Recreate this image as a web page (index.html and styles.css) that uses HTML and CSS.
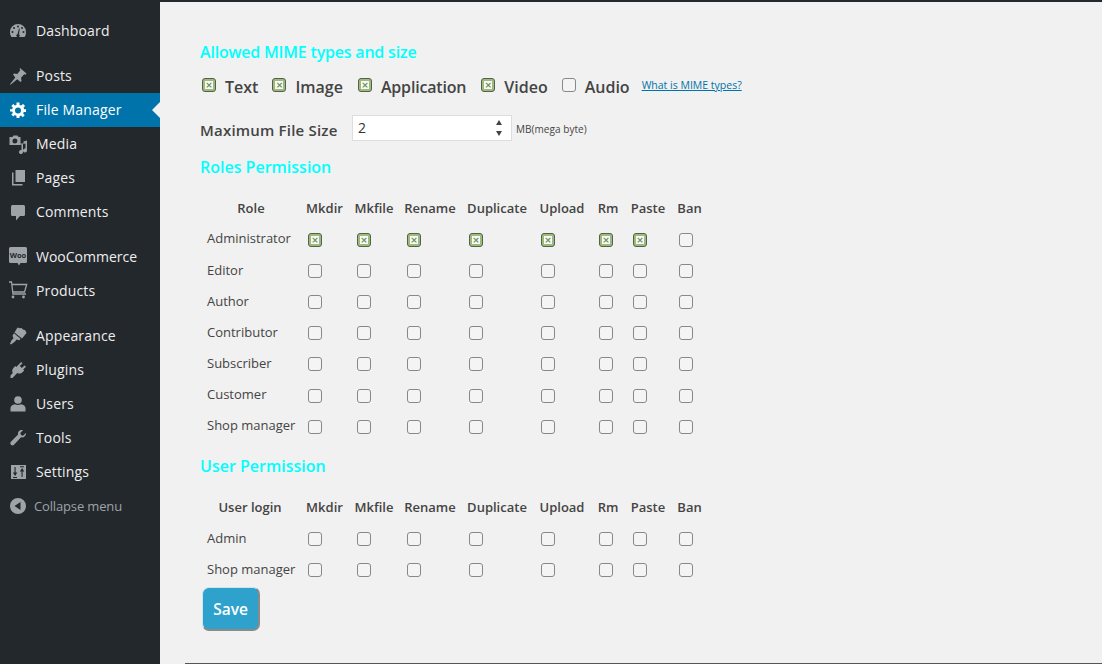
FILE: index.html
```html
<!DOCTYPE html>
<html lang="en">
<head>
<meta charset="utf-8">
<title>File Manager</title>
<link rel="stylesheet" href="styles.css">
</head>
<body>
<div class="app">
<nav class="menu">
  <ul class="group">
    <li class="item"><svg class="ic" viewBox="0 0 20 20"><path d="M10 3a8 8 0 0 0-8 8c0 1.900.5 3.500 1.400 5h13.200A8 8 0 0 0 18 11a8 8 0 0 0-8-8z"/><g class="cut"><circle cx="10" cy="5.500" r="1"/><circle cx="6" cy="7" r="1"/><circle cx="14" cy="7" r="1"/><circle cx="4.500" cy="11" r="1"/><circle cx="15.500" cy="11" r="1"/><path d="M11 7.500l.8.200-.8 5.500a1.700 1.700 0 1 1-1.500-.2z"/></g></svg><span>Dashboard</span></li>
  </ul>
  <ul class="group">
    <li class="item"><svg class="ic" viewBox="0 0 20 20"><path d="M12 2l6.500 5.500-1 1.200-1.300-.4-3.200 3.500.5 3.200-1 1-3.300-2.800-6.700 5.500-.5-.5 5.300-6.800L5 8.500l1-1 3.300.4 3-3.600-.6-1.300z"/></svg><span>Posts</span></li>
    <li class="item current"><svg class="ic" viewBox="0 0 20 20"><path fill-rule="evenodd" d="M18 12h-2.200c-.2.600-.4 1.100-.7 1.600l1.600 1.600-2 2-1.600-1.600c-.5.300-1 .5-1.600.7V18H8.500v-2.300c-.6-.2-1.100-.4-1.600-.7l-1.600 1.600-2-2 1.600-1.600c-.3-.5-.5-1-.7-1.600H2V9.200h2.200c.2-.6.4-1.100.7-1.600L3.300 6l2-2 1.600 1.600c.5-.3 1-.5 1.600-.7V2.500h3v2.400c.6.200 1.100.4 1.600.7L15.100 4l2 2-1.600 1.600c.3.500.5 1 .7 1.600H18zM10 7.500a3 3 0 1 0 0 6 3 3 0 0 0 0-6z"/></svg><span>File Manager</span></li>
    <li class="item"><svg class="ic" viewBox="0 0 20 20"><path fill-rule="evenodd" d="M1.500 3h3l1-1.500h4l1 1.500h2v8h-11zm5.500 1.500a2.500 2.500 0 1 0 0 5 2.500 2.500 0 0 0 0-5zM19 6.500V16.500a2 2 0 1 1-1.500-1.900V9.500l-2.500.5v8a2 2 0 1 1-1.500-1.900v-5.600h-1V9.500h3V7.500z"/></svg><span>Media</span></li>
    <li class="item"><svg class="ic" viewBox="0 0 20 20"><path d="M7.500 2h9.500v12H7.500zM5.500 4.500V16h9v1.500H4V4.500z"/></svg><span>Pages</span></li>
    <li class="item"><svg class="ic" viewBox="0 0 20 20"><path d="M4.500 3h11A1.500 1.500 0 0 1 17 4.500v8a1.500 1.500 0 0 1-1.500 1.500H12l-4 4.500V14H4.500A1.500 1.500 0 0 1 3 12.500v-8A1.500 1.500 0 0 1 4.500 3z"/></svg><span>Comments</span></li>
  </ul>
  <ul class="group">
    <li class="item plain"><svg class="ic" viewBox="0 0 20 20"><path d="M2.500 0h15A1.500 1.500 0 0 1 19 1.500v13a1.500 1.500 0 0 1-1.500 1.500H12.500l-1.500 2.500-1.500-2.500h-7A1.500 1.500 0 0 1 1 14.500v-13A1.500 1.500 0 0 1 2.500 0z"/><text class="woo" x="10" y="10.500" text-anchor="middle">Woo</text></svg><span>WooCommerce</span></li>
    <li class="item"><svg class="ic" viewBox="0 0 20 20"><path class="line" d="M1 1h2.500l1.500 12h13M3.700 3.500h15l-2.200 7.500H4.700"/><circle cx="5" cy="16" r="1.400"/><circle cx="15.500" cy="16" r="1.400"/></svg><span>Products</span></li>
  </ul>
  <ul class="group">
    <li class="item"><svg class="ic" viewBox="0 0 20 20"><path d="M9.500 1.500l2 .8 2-.3 1.500 1.500 2.200.7 1.300 2.800-4.500 5.500-7.500-6zM6 7.300l6.500 5.500-1.200 1.400-2.800-.6-1.500 2L3 18.500l-1-.8 1.700-3.700 1.800-1.600-1-2.700z"/></svg><span>Appearance</span></li>
    <li class="item"><svg class="ic" viewBox="0 0 20 20"><path d="M13.200 2l1.300 1.300-2.700 2.800 2 2 2.800-2.700 1.400 1.300-2.800 2.800 1 1-1.500 1.500c-1.800 1.800-4 2-5.500 1L4.500 18H2.500v-2.500l2.300-2.500c-1-1.500-.8-3.700 1-5.500L7.300 6l1 1z"/></svg><span>Plugins</span></li>
    <li class="item"><svg class="ic" viewBox="0 0 20 20"><circle cx="10" cy="6" r="3.800"/><path d="M2.500 17.500V14c0-2 2-3.500 4.500-3.800 1.800 1 4 1 6 0 2.500.3 4.500 1.800 4.500 3.800v3.500z"/></svg><span>Users</span></li>
    <li class="item"><svg class="ic" viewBox="0 0 20 20"><path d="M18 5.500c0 2.500-2.500 4.500-5 3.800L6 16.700a2.100 2.100 0 0 1-3.100-3l7.200-7.100C9.500 4 11.500 1.800 14 2c.4 0 .8.100 1 .2L12.300 5l.7 2 2 .7 2.800-2.700c.1.200.2.300.2.500z"/></svg><span>Tools</span></li>
    <li class="item"><svg class="ic" viewBox="0 0 20 20"><path d="M3 3h15v14H3z"/><path class="cut" d="M6.500 5h1.100v5.500h1.700l-2.200 3.500-2.200-3.500h1.600zM13.500 15h1.100V9.500h1.700l-2.200-3.500-2.200 3.500h1.600zM5 15h4v1H5zM12 4.200h4v1h-4z"/></svg><span>Settings</span></li>
    <li class="item collapse"><svg class="ic" viewBox="0 0 20 20"><path fill-rule="evenodd" d="M10 2a8 8 0 1 1 0 16 8 8 0 0 1 0-16zm2.500 4l-6 4 6 4z"/></svg><span>Collapse menu</span></li>
  </ul>
</nav>
<main class="content">
  <h2 class="heading first">Allowed MIME types and size</h2>
  <div class="mimes">
    <label class="mime snug"><span class="box on"></span>Text</label>
    <label class="mime"><span class="box on"></span>Image</label>
    <label class="mime tight"><span class="box on"></span>Application</label>
    <label class="mime snug"><span class="box on"></span>Video</label>
    <label class="mime"><span class="box"></span>Audio</label>
    <a class="help" href="#">What is MIME types?</a>
  </div>
  <div class="size">
    <span class="size-label">Maximum File Size</span>
    <span class="number">2<span class="spin"><i class="up"></i><i class="down"></i></span></span>
    <span class="unit">MB(mega byte)</span>
  </div>
  <h2 class="heading roles">Roles Permission</h2>
  <table class="perm role-table">
    <thead><tr><th>Role</th><th>Mkdir</th><th>Mkfile</th><th>Rename</th><th>Duplicate</th><th>Upload</th><th>Rm</th><th>Paste</th><th>Ban</th></tr></thead>
    <tbody>
      <tr><td class="name">Administrator</td><td><span class="box on"></span></td><td><span class="box on"></span></td><td><span class="box on"></span></td><td><span class="box on"></span></td><td><span class="box on"></span></td><td><span class="box on"></span></td><td><span class="box on"></span></td><td><span class="box"></span></td></tr>
      <tr><td class="name">Editor</td><td><span class="box"></span></td><td><span class="box"></span></td><td><span class="box"></span></td><td><span class="box"></span></td><td><span class="box"></span></td><td><span class="box"></span></td><td><span class="box"></span></td><td><span class="box"></span></td></tr>
      <tr><td class="name">Author</td><td><span class="box"></span></td><td><span class="box"></span></td><td><span class="box"></span></td><td><span class="box"></span></td><td><span class="box"></span></td><td><span class="box"></span></td><td><span class="box"></span></td><td><span class="box"></span></td></tr>
      <tr><td class="name">Contributor</td><td><span class="box"></span></td><td><span class="box"></span></td><td><span class="box"></span></td><td><span class="box"></span></td><td><span class="box"></span></td><td><span class="box"></span></td><td><span class="box"></span></td><td><span class="box"></span></td></tr>
      <tr><td class="name">Subscriber</td><td><span class="box"></span></td><td><span class="box"></span></td><td><span class="box"></span></td><td><span class="box"></span></td><td><span class="box"></span></td><td><span class="box"></span></td><td><span class="box"></span></td><td><span class="box"></span></td></tr>
      <tr><td class="name">Customer</td><td><span class="box"></span></td><td><span class="box"></span></td><td><span class="box"></span></td><td><span class="box"></span></td><td><span class="box"></span></td><td><span class="box"></span></td><td><span class="box"></span></td><td><span class="box"></span></td></tr>
      <tr><td class="name">Shop manager</td><td><span class="box"></span></td><td><span class="box"></span></td><td><span class="box"></span></td><td><span class="box"></span></td><td><span class="box"></span></td><td><span class="box"></span></td><td><span class="box"></span></td><td><span class="box"></span></td></tr>
    </tbody>
  </table>
  <h2 class="heading users">User Permission</h2>
  <table class="perm">
    <thead><tr><th>User login</th><th>Mkdir</th><th>Mkfile</th><th>Rename</th><th>Duplicate</th><th>Upload</th><th>Rm</th><th>Paste</th><th>Ban</th></tr></thead>
    <tbody>
      <tr><td class="name">Admin</td><td><span class="box"></span></td><td><span class="box"></span></td><td><span class="box"></span></td><td><span class="box"></span></td><td><span class="box"></span></td><td><span class="box"></span></td><td><span class="box"></span></td><td><span class="box"></span></td></tr>
      <tr><td class="name">Shop manager</td><td><span class="box"></span></td><td><span class="box"></span></td><td><span class="box"></span></td><td><span class="box"></span></td><td><span class="box"></span></td><td><span class="box"></span></td><td><span class="box"></span></td><td><span class="box"></span></td></tr>
    </tbody>
  </table>
  <button class="save" type="button">Save</button>
  <div class="rule"></div>
</main>
</div>
</body>
</html>
```
FILE: styles.css
```css
* { box-sizing: border-box; }
html, body { margin: 0; height: 100%; }
body { font-family: "Open Sans", "Noto Sans", sans-serif; font-size: 13px; color: #444; background: #f1f1f1; overflow: hidden; }
.app { display: flex; height: 664px; }

.menu { width: 160px; flex: none; background: #23282d; padding-top: 14px; }
.group { list-style: none; margin: 0 0 11px; padding: 0; }
.item { display: flex; align-items: center; height: 34px; color: #eee; font-size: 14px; letter-spacing: .15px; position: relative; }
.item span { margin-top: -2px; }
.plain { letter-spacing: 0; }
.ic { width: 20px; height: 20px; margin: 0 8px; fill: #9ea3a8; flex: none; }
.ic .cut { fill: #23282d; }
.ic .line { fill: none; stroke: #9ea3a8; stroke-width: 1.3; }
.ic .woo { fill: #23282d; font: 700 7.5px "Open Sans", sans-serif; letter-spacing: 0; }
.current { background: #0073aa; color: #fff; }
.current .ic { fill: #fff; }
.current::after { content: ""; position: absolute; right: 0; top: 9px; border: 8px solid transparent; border-left-width: 0; border-right-color: #f1f1f1; }
.collapse { color: #9ea3a8; font-size: 13px; letter-spacing: -.15px; }
.item.collapse span { margin: 0 0 0 -2px; }

.content { flex: 1; display: flex; flex-direction: column; align-items: flex-start; border-top: 2px solid #23282d; padding: 39px 0 0 40px; }
.heading { margin: 0; font-size: 16px; font-weight: 600; line-height: 22px; color: #00ffff; }
.first { letter-spacing: -.2px; }
.mimes { display: flex; align-items: center; height: 24px; margin-top: 12px; padding-left: 2px; font-size: 16px; font-weight: 600; color: #444; }
.mime { display: flex; align-items: center; margin-right: 15px; }
.mime.snug { margin-right: 14px; }
.tight { letter-spacing: -.18px; }
.mime .box { margin: -4px 9px 0 0; }
.help { font-size: 10.5px; font-weight: 400; color: #0073aa; margin: -4px 0 0 -3px; }
.size { display: flex; align-items: center; height: 26px; margin-top: 16px; }
.size-label { font-size: 15px; font-weight: 600; letter-spacing: .2px; width: 152px; margin-top: 4px; }
.number { width: 160px; height: 26px; background: #fff; border: 1px solid #ddd; font-size: 14px; padding: 0 9px 0 5px; line-height: 24px; display: flex; justify-content: space-between; align-items: center; color: #333; }
.spin { display: flex; flex-direction: column; gap: 6px; }
.spin i { display: block; border: 3px solid transparent; border-top-width: 0; border-bottom: 5px solid #444; }
.spin .down { transform: rotate(180deg); }
.unit { font-size: 10px; letter-spacing: .05px; margin: 2px 0 0 4px; }
.roles { margin-top: 15px; }
.users { margin-top: 15px; }

.perm { border-collapse: collapse; margin-top: 14px; table-layout: fixed; width: 502px; }
.perm th { font-size: 13px; font-weight: 600; height: 31px; padding: 0; white-space: nowrap; text-align: center; }
.perm td { height: 31px; padding: 0; }
.perm th:nth-child(1), .perm td:nth-child(1) { width: 100px; }
.perm th:nth-child(2), .perm td:nth-child(2) { width: 49px; }
.perm th:nth-child(3), .perm td:nth-child(3) { width: 50px; }
.perm th:nth-child(4), .perm td:nth-child(4) { width: 62px; }
.perm th:nth-child(5), .perm td:nth-child(5) { width: 72px; }
.perm th:nth-child(6), .perm td:nth-child(6) { width: 58px; }
.perm th:nth-child(7), .perm td:nth-child(7) { width: 34px; }
.perm th:nth-child(8), .perm td:nth-child(8) { width: 46px; }
.perm th:nth-child(9), .perm td:nth-child(9) { width: 31px; }
.perm th:nth-child(9) { padding-left: 6px; }
.role-table th:first-child { padding-left: 2px; }
.role-table tbody tr:first-child .name { padding-bottom: 2px; }
.perm td .box { margin-left: 8px; vertical-align: middle; }
.role-table tbody tr:nth-child(n+6) td .box { margin-top: 2px; }
.perm .name { padding-left: 7px; white-space: nowrap; }

.box { display: inline-block; flex: none; width: 14px; height: 14px; border: 1px solid #888; border-radius: 3px; background: #f4f4f4; position: relative; }
.box.on { background: #9dbb7c; border-color: #56604d; }
.box.on::after { content: "×"; position: absolute; left: 2px; top: 2px; width: 8px; height: 8px; background: #f8faf5; color: #6f8a5c; font: 700 9px/8px "DejaVu Sans", sans-serif; text-align: center; }

.save { display: block; width: 58px; height: 44px; margin: 3px 0 0 2px; background: #2ea2cc; color: #fff; border-style: solid; border-width: 1px 2px 2px 1px; border-color: #cfe6ee #8a8a8a #8a8a8a #cfe6ee; border-radius: 7px; font: 600 15.5px "Open Sans", sans-serif; padding: 1px 0 0; }
.rule { align-self: stretch; height: 1px; margin: auto 0 0 -15px; background: #555; }
```
